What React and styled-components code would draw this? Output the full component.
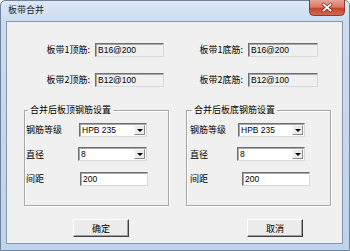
import styled, { createGlobalStyle } from 'styled-components';

const GlobalStyle = createGlobalStyle`
  html, body {
    margin: 0;
    padding: 0;
    width: 350px;
    height: 251px;
    overflow: hidden;
    background: #ffffff;
  }
`;

const CJK = `"Noto Sans CJK SC", "DejaVu Sans", sans-serif`;
const LATIN = `"Liberation Sans", "Noto Sans CJK SC", sans-serif`;

const Window = styled.div`
  width: 350px;
  height: 251px;
  box-sizing: border-box;
  display: flex;
  flex-direction: column;
  background: linear-gradient(180deg, #dde8f6 0px, #cbdcf0 21px, #bed3ec 100%);
  border: 1px solid #6f849c;
  border-radius: 5px 5px 0 0;
  font-family: ${CJK};
  color: #000;
`;

const TitleBar = styled.div`
  height: 20px;
  display: flex;
  align-items: flex-start;
  padding-left: 7px;
`;

const Title = styled.span`
  font-size: 9px;
  line-height: 18px;
  flex: 1;
  color: #1b1b1b;
`;

const CloseSlot = styled.div`
  width: 36px;
  height: 16px;
  margin-right: 4px;
  margin-top: -1px;
  flex-shrink: 0;
  line-height: 0;
`;

const Frame = styled.div`
  flex: 1;
  display: flex;
  padding: 0 6px 6px 5px;
`;

const Client = styled.div`
  flex: 1;
  display: flex;
  flex-direction: column;
  background: #f0f0f0;
  border: 1px solid #8796aa;
`;

const TopGrid = styled.div`
  display: grid;
  grid-template-columns: 88px 69px 84px 70px;
  row-gap: 16px;
  margin-top: 21px;
  align-items: center;
`;

const Label = styled.span`
  font-size: 9px;
  line-height: 14px;
  white-space: nowrap;
  text-align: ${(p) => (p.$right ? 'right' : 'left')};
  padding-right: ${(p) => (p.$right ? '5px' : '0')};
  margin-top: ${(p) => p.$drop || 0}px;
`;

const Field = styled.div`
  height: 14px;
  width: ${(p) => p.$w || 68}px;
  margin-left: ${(p) => p.$shift || 0}px;
  box-sizing: border-box;
  border: 1px solid;
  border-color: #6e6e6e #d8d8d8 #d8d8d8 #6e6e6e;
  box-shadow: inset 1px 1px 0 #a8a8a8;
  background: ${(p) => (p.$readonly ? '#f0f0f0' : '#ffffff')};
  font-family: ${LATIN};
  font-size: 8.5px;
  line-height: 12px;
  padding-left: 2px;
  display: flex;
  align-items: center;
`;

const FieldText = styled.span`
  flex: 1;
`;

const DropButton = styled.div`
  width: 11px;
  height: 10px;
  margin-right: 1px;
  box-sizing: border-box;
  background: #ececec;
  border: 1px solid;
  border-color: #f8f8f8 #8a8a8a #8a8a8a #f8f8f8;
  display: flex;
  align-items: center;
  justify-content: center;
`;

const Arrow = styled.div`
  width: 0;
  height: 0;
  border-left: 3px solid transparent;
  border-right: 3px solid transparent;
  border-top: 3px solid #000;
`;

const Groups = styled.div`
  display: flex;
  gap: 17px;
  margin-top: 16px;
  padding-left: 17px;
`;

const Group = styled.fieldset`
  margin: 0;
  width: 145px;
  box-sizing: border-box;
  border: 1px solid #a6a6a6;
  box-shadow: 1px 1px 0 #ffffff, inset 1px 1px 0 #ffffff;
  padding: 6px 0 19px ${(p) => p.$pad}px;
  display: grid;
  grid-template-columns: ${(p) => p.$col}px 1fr;
  row-gap: 9px;
  align-items: center;
`;

const Legend = styled.legend`
  font-size: 9px;
  line-height: 14px;
  padding: 0 2px;
  margin-left: 2px;
`;

const ButtonRow = styled.div`
  display: flex;
  gap: 118px;
  margin-top: 13px;
  padding-left: 66px;
`;

const Button = styled.div`
  width: 56px;
  height: 18px;
  box-sizing: border-box;
  background: #ececec;
  border: 1px solid;
  border-color: #ffffff #404040 #404040 #ffffff;
  box-shadow: inset -1px -1px 0 #a0a0a0;
  font-size: 9px;
  display: flex;
  align-items: center;
  justify-content: center;
`;

const CloseIcon = () => (
  <svg width="36" height="16" viewBox="0 0 36 16">
    <defs>
      <linearGradient id="closeRed" x1="0" y1="0" x2="0" y2="1">
        <stop offset="0" stopColor="#e8a597" />
        <stop offset="0.45" stopColor="#d97a66" />
        <stop offset="0.55" stopColor="#c5462f" />
        <stop offset="1" stopColor="#d56a52" />
      </linearGradient>
    </defs>
    <path
      d="M0.5 0 V11.5 Q0.5 15.5 4.5 15.5 H31.5 Q35.5 15.5 35.5 11.5 V0"
      fill="url(#closeRed)"
      stroke="#8a3a2e"
    />
    <path
      d="M14.5 4.5 L21.5 10.5 M21.5 4.5 L14.5 10.5"
      stroke="#6e241b"
      strokeWidth="3"
      strokeLinecap="square"
    />
    <path
      d="M14.5 4.5 L21.5 10.5 M21.5 4.5 L14.5 10.5"
      stroke="#ffffff"
      strokeWidth="1.7"
      strokeLinecap="square"
    />
  </svg>
);

const Select = ({ value, w, shift }) => (
  <Field $w={w} $shift={shift}>
    <FieldText>{value}</FieldText>
    <DropButton>
      <Arrow />
    </DropButton>
  </Field>
);

const SettingsGroup = ({ title, pad, col, w, shift }) => (
  <Group $pad={pad} $col={col}>
    <Legend>{title}</Legend>
    <Label>钢筋等级</Label>
    <Select value="HPB 235" w={w} />
    <Label $drop={2}>直径</Label>
    <Select value="8" w={w + 1} shift={-1} />
    <Label $drop={1}>间距</Label>
    <Field $w={68} $shift={shift}>200</Field>
  </Group>
);

export default function App() {
  return (
    <>
      <GlobalStyle />
      <Window>
        <TitleBar>
          <Title>板带合并</Title>
          <CloseSlot>
            <CloseIcon />
          </CloseSlot>
        </TitleBar>
        <Frame>
          <Client>
            <TopGrid>
              <Label $right>板带1顶筋:</Label>
              <Field $readonly $w={69}>B16@200</Field>
              <Label $right>板带1底筋:</Label>
              <Field $readonly $w={70}>B16@200</Field>
              <Label $right>板带2顶筋:</Label>
              <Field $readonly $w={69}>B12@100</Field>
              <Label $right>板带2底筋:</Label>
              <Field $readonly $w={70}>B12@100</Field>
            </TopGrid>
            <Groups>
              <SettingsGroup title="合并后板顶钢筋设置" pad={1} col={53} w={68} shift={1} />
              <SettingsGroup title="合并后板底钢筋设置" pad={3} col={48} w={67} shift={4} />
            </Groups>
            <ButtonRow>
              <Button>确定</Button>
              <Button>取消</Button>
            </ButtonRow>
          </Client>
        </Frame>
      </Window>
    </>
  );
}
